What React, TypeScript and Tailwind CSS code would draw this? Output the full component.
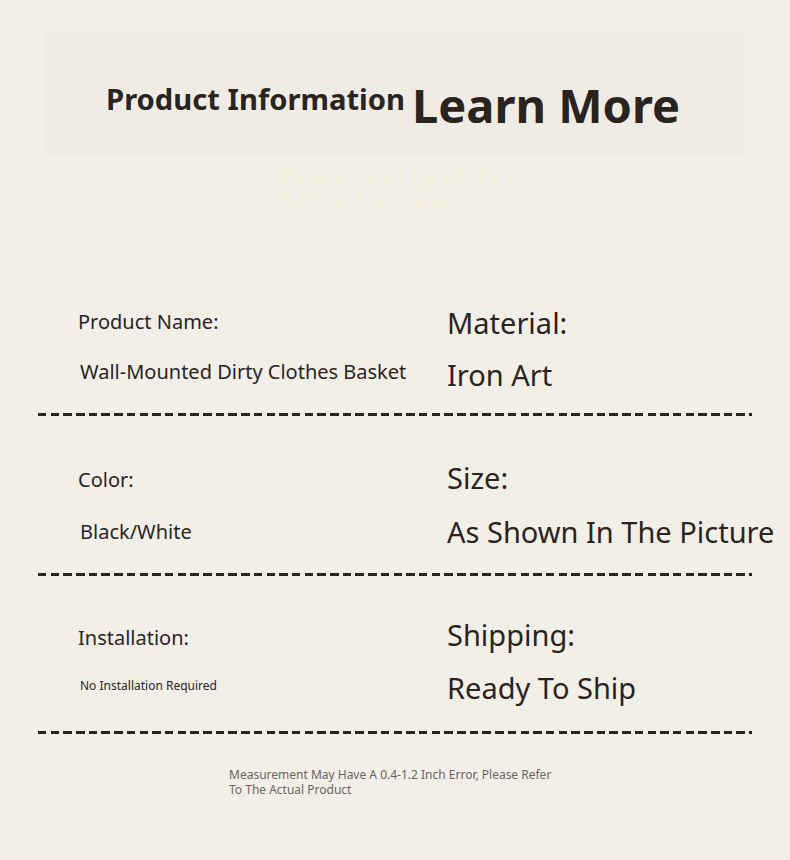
import React from 'react';

const rows = [
  { label: 'Product Name:', value: 'Wall-Mounted Dirty Clothes Basket', rLabel: 'Material:', rValue: 'Iron Art', small: false, h: 'h-[157px]', lTop: 'pt-[52px]', lGap: 'mt-[22px]', rTop: 'pt-[49px]', rGap: 'mt-[16px]' },
  { label: 'Color:', value: 'Black/White', rLabel: 'Size:', rValue: 'As Shown In The Picture', small: false, h: 'h-[157px]', lTop: 'pt-[50px]', lGap: 'mt-[24px]', rTop: 'pt-[44px]', rGap: 'mt-[18px]' },
  { label: 'Installation:', value: 'No Installation Required', rLabel: 'Shipping:', rValue: 'Ready To Ship', small: true, h: 'h-[155px]', lTop: 'pt-[48px]', lGap: 'mt-[20px]', rTop: 'pt-[41px]', rGap: 'mt-[17px]' },
];

const Dashes: React.FC = () => (
  <div className="h-[3px] w-[714px] bg-[repeating-linear-gradient(to_right,#2b241d_0_8.5px,transparent_8.5px_12.7px)]" />
);

const App: React.FC = () => {
  return (
    <div
      className="w-[790px] h-[860px] bg-[#f2efe9] text-[#2b241d] overflow-hidden"
      style={{ fontFamily: '"Noto Sans", "Open Sans", sans-serif' }}
    >
      {/* header */}
      <div className="mx-[46px] mt-[32px] h-[126px] bg-[#efece6] flex items-start pl-[60px] pt-[50px] gap-[7px]">
        <h2 className="text-[29.2px] font-bold leading-none mt-[3px] whitespace-nowrap">Product Information</h2>
        <h1 className="text-[47px] font-bold leading-none whitespace-nowrap">Learn More</h1>
      </div>
      <div className="ml-[280px] mt-[6px] text-[22px] leading-[23px] text-[#f6eedb]">
        <p>Please Read Carefully</p>
        <p>Before Purchase</p>
      </div>

      {/* details */}
      <div className="mx-[38px] mt-[46px] flex flex-col">
        {rows.map((r) => (
          <div key={r.label} className="flex flex-col">
            <div className={`grid grid-cols-[409px_1fr] ${r.h}`}>
              <div className={`pl-[40px] flex flex-col ${r.lTop}`}>
                <p className="text-[20px] leading-[28px] whitespace-nowrap">{r.label}</p>
                <p
                  className={`${r.lGap} pl-[2px] leading-[28px] whitespace-nowrap ${r.small ? 'text-[12px]' : 'text-[20px]'}`}
                >
                  {r.value}
                </p>
              </div>
              <div className={`flex flex-col ${r.rTop}`}>
                <p className="text-[29px] leading-[36px] whitespace-nowrap">{r.rLabel}</p>
                <p className={`text-[29px] leading-[36px] whitespace-nowrap ${r.rGap}`}>{r.rValue}</p>
              </div>
            </div>
            <Dashes />
          </div>
        ))}
      </div>

      <div className="ml-[229px] mt-[33px] text-[12px] leading-[15px] text-[#6b655e] whitespace-nowrap">
        <p>Measurement May Have A 0.4-1.2 Inch Error, Please Refer</p>
        <p>To The Actual Product</p>
      </div>
    </div>
  );
};

export default App;
